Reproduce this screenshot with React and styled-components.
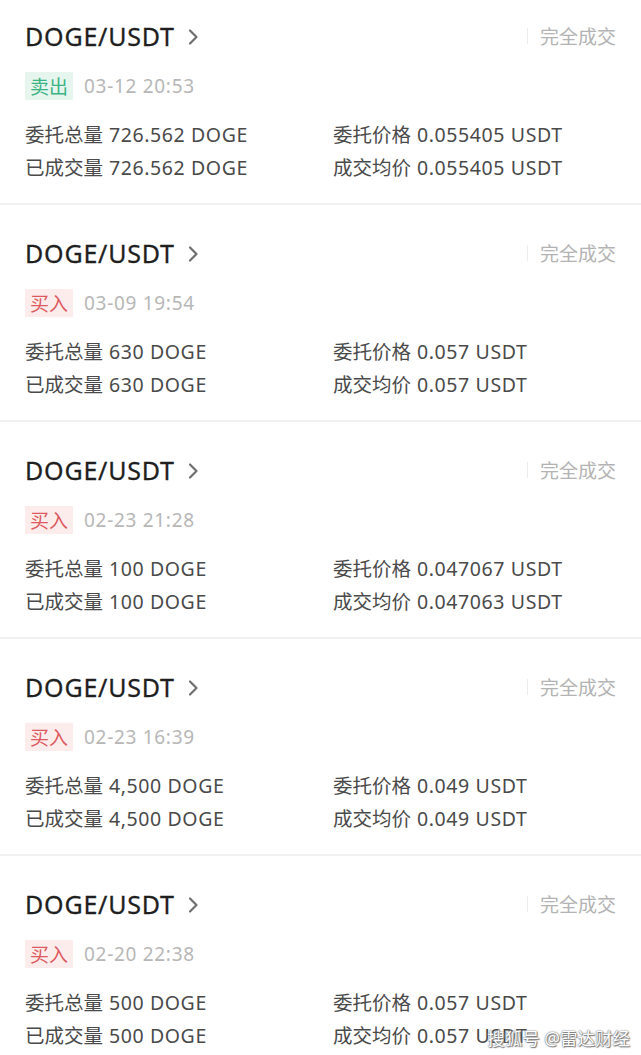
import styled, { createGlobalStyle } from "styled-components";

const orders = [
  { side: "sell", time: "03-12 20:53", total: "726.562 DOGE", filled: "726.562 DOGE", price: "0.055405 USDT", avg: "0.055405 USDT" },
  { side: "buy", time: "03-09 19:54", total: "630 DOGE", filled: "630 DOGE", price: "0.057 USDT", avg: "0.057 USDT" },
  { side: "buy", time: "02-23 21:28", total: "100 DOGE", filled: "100 DOGE", price: "0.047067 USDT", avg: "0.047063 USDT" },
  { side: "buy", time: "02-23 16:39", total: "4,500 DOGE", filled: "4,500 DOGE", price: "0.049 USDT", avg: "0.049 USDT" },
  { side: "buy", time: "02-20 22:38", total: "500 DOGE", filled: "500 DOGE", price: "0.057 USDT", avg: "0.057 USDT" },
];

function App() {
  return (
    <Page>
      <GlobalStyle />
      <List>
        {orders.map((o, i) => (
          <Card key={i}>
            <Head>
              <Pair>
                DOGE/USDT
                <svg width="12" height="18" viewBox="0 0 12 18">
                  <path d="M3 2.5 L9.5 9 L3 15.5" fill="none" stroke="#6f6f6f" strokeWidth="2.2" strokeLinecap="round" strokeLinejoin="round" />
                </svg>
              </Pair>
              <Status>完全成交</Status>
            </Head>
            <Meta>
              <Badge $side={o.side}>{o.side === "sell" ? "卖出" : "买入"}</Badge>
              <Time>{o.time}</Time>
            </Meta>
            <Grid>
              <Field><span>委托总量</span>{o.total}</Field>
              <Field><span>委托价格</span>{o.price}</Field>
              <Field><span>已成交量</span>{o.filled}</Field>
              <Field><span>成交均价</span>{o.avg}</Field>
            </Grid>
          </Card>
        ))}
      </List>
      <Watermark>搜狐号 @雷达财经</Watermark>
    </Page>
  );
}

const GlobalStyle = createGlobalStyle`
  html, body {
    margin: 0;
    padding: 0;
    background: #fff;
    overflow: hidden;
  }
  body {
    font-family: "Noto Sans", "Noto Sans CJK SC", sans-serif;
  }
`;

const Page = styled.div`
  position: relative;
  width: 641px;
  height: 1055px;
  overflow: hidden;
  background: #fff;
`;

const List = styled.div`
  margin-top: -12px;
  display: flex;
  flex-direction: column;
`;

const Card = styled.div`
  padding: 30px 25px 19px;
  border-bottom: 2px solid #f1f1f1;
`;

const Head = styled.div`
  display: flex;
  align-items: center;
  justify-content: space-between;
  height: 36px;
`;

const Pair = styled.div`
  display: flex;
  align-items: center;
  gap: 12px;
  font-size: 25px;
  font-weight: 400;
  color: #1f1f1f;
  letter-spacing: 0.8px;
  -webkit-text-stroke: 0.3px #1f1f1f;
  svg {
    margin-top: 1px;
  }
`;

const Status = styled.div`
  display: flex;
  align-items: center;
  font-size: 19px;
  color: #b3b3b3;
  &::before {
    content: "";
    width: 1px;
    height: 16px;
    background: #ececec;
    margin-right: 12px;
  }
`;

const Meta = styled.div`
  display: flex;
  align-items: center;
  gap: 11px;
  margin-top: 18px;
  height: 28px;
`;

const Badge = styled.span`
  display: inline-flex;
  align-items: center;
  justify-content: center;
  width: 48px;
  height: 28px;
  font-size: 19px;
  color: ${(p) => (p.$side === "sell" ? "#3cb383" : "#de5a5e")};
  background: ${(p) => (p.$side === "sell" ? "#e6f6ee" : "#fcecec")};
`;

const Time = styled.span`
  font-size: 19px;
  letter-spacing: 0.7px;
  color: #b7b7b7;
`;

const Grid = styled.div`
  display: grid;
  grid-template-columns: 308px 1fr;
  margin-top: 18px;
`;

const Field = styled.div`
  height: 33px;
  line-height: 33px;
  font-size: 19.5px;
  letter-spacing: 0.6px;
  color: #4a4a4a;
  white-space: nowrap;
  span {
    margin-right: 6px;
    letter-spacing: 0;
  }
`;

const Watermark = styled.div`
  position: absolute;
  right: 11px;
  bottom: 5px;
  font-size: 17.5px;
  color: #fff;
  text-shadow: 0 0 1px #666, 0 0 2px #888, 1px 1px 1px #777;
`;

export default App;
